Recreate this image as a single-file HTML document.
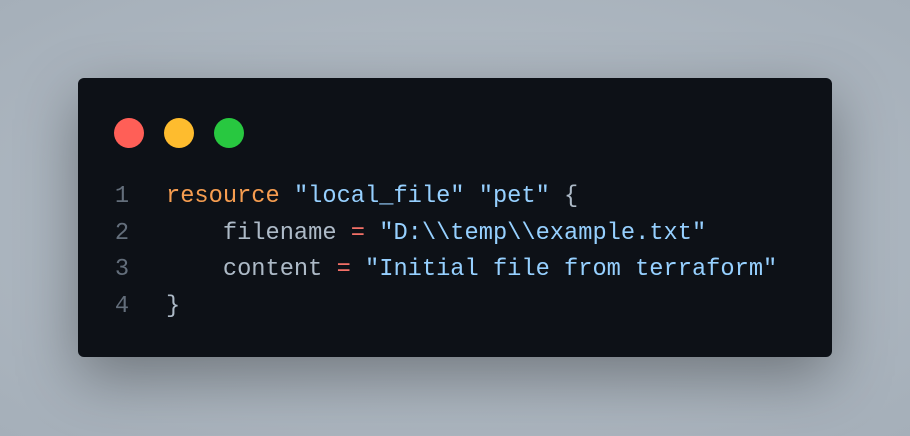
<!DOCTYPE html>
<html><head><style>
html,body{margin:0;padding:0}
body{width:910px;height:436px;background:radial-gradient(ellipse at center,#b7c0c9 0%,#a5afb9 100%);position:relative;overflow:hidden;font-family:"Liberation Mono",monospace}
.card{position:absolute;left:78px;top:78px;width:754px;height:279px;background:#0d1117;border-radius:6px;box-shadow:0 20px 60px rgba(0,0,0,0.35)}
.dot{position:absolute;top:40px;width:30px;height:30px;border-radius:50%}
.code{position:absolute;left:0;top:101px;font-size:23.7px;line-height:36.5px;color:#adbac7;white-space:pre}
.ln{display:inline-block;width:88px;text-align:left;color:#636e7b}
.ln span{display:inline-block;width:50px;margin-left:19px;text-align:center}
.k{color:#f69d50}.s{color:#96d0ff}.o{color:#f47067}
</style></head><body>
<div class="card">
<div class="dot" style="left:36px;background:#ff5f57"></div>
<div class="dot" style="left:86px;background:#febc2e"></div>
<div class="dot" style="left:136px;background:#28c840"></div>
<div class="code"><span class="ln"><span>1</span></span><span class="k">resource</span> <span class="s">"local_file"</span> <span class="s">"pet"</span> {
<span class="ln"><span>2</span></span>    filename <span class="o">=</span> <span class="s">"D:\\temp\\example.txt"</span>
<span class="ln"><span>3</span></span>    content <span class="o">=</span> <span class="s">"Initial file from terraform"</span>
<span class="ln"><span>4</span></span>}</div>
</div>
</body></html>
